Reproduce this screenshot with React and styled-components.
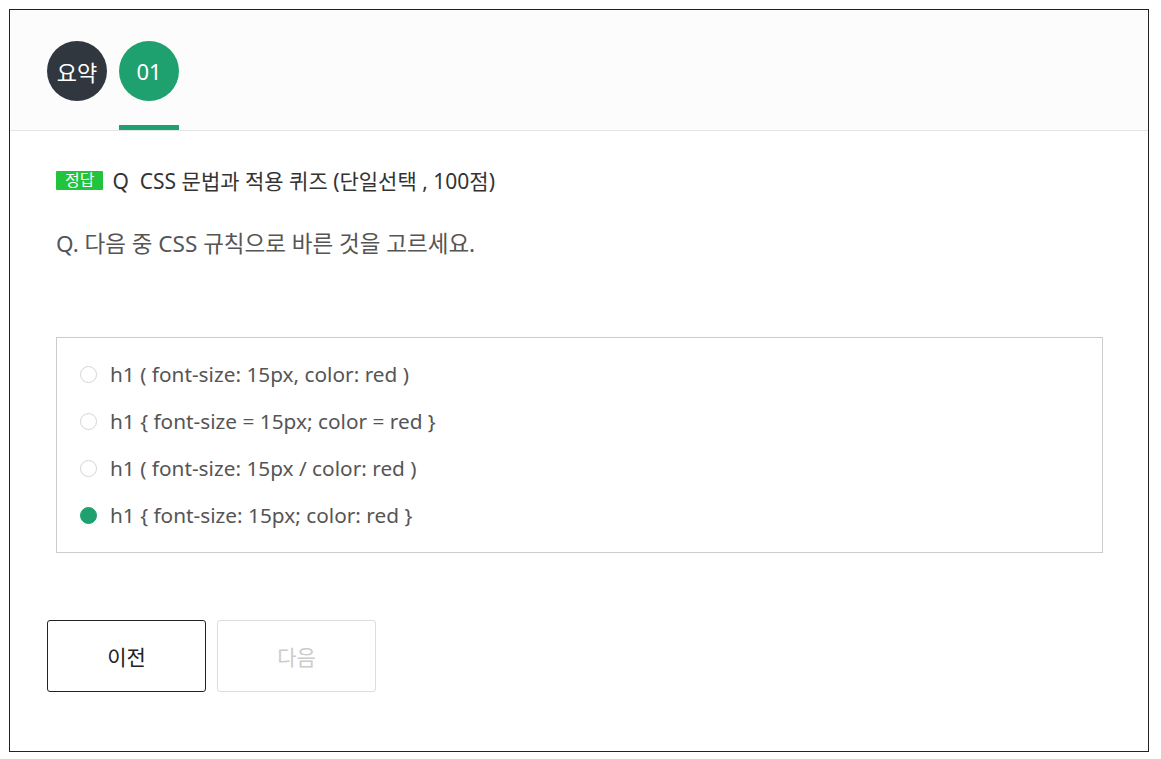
import styled, { createGlobalStyle } from "styled-components";

const GlobalStyle = createGlobalStyle`
  body {
    margin: 0;
    background: #fff;
    font-family: "Noto Sans", "Noto Sans CJK KR", sans-serif;
  }
`;

const options = [
  "h1 ( font-size: 15px, color: red )",
  "h1 { font-size = 15px; color = red }",
  "h1 ( font-size: 15px / color: red )",
  "h1 { font-size: 15px; color: red }",
];

const App = () => {
  return (
    <Page>
      <GlobalStyle />
      <Frame>
        <Header>
          <Tab>
            <Circle $dark>요약</Circle>
          </Tab>
          <Tab $active>
            <Circle>01</Circle>
          </Tab>
        </Header>

        <Content>
          <Title>
            <Badge>정답</Badge>
            <span>Q&nbsp;&nbsp;CSS 문법과 적용 퀴즈 (단일선택 , 100점)</span>
          </Title>
          <Question>Q. 다음 중 CSS 규칙으로 바른 것을 고르세요.</Question>

          <OptionBox>
            {options.map((text, i) => (
              <Option key={i}>
                <Radio $checked={i === 3} />
                {text}
              </Option>
            ))}
          </OptionBox>
        </Content>

        <Buttons>
          <NavButton>이전</NavButton>
          <NavButton disabled>다음</NavButton>
        </Buttons>
      </Frame>
    </Page>
  );
};

const Page = styled.div`
  padding: 9px 12px 7px 9px;
`;

const Frame = styled.div`
  width: 1138px;
  height: 741px;
  border: 1px solid #222;
  display: flex;
  flex-direction: column;
`;

const Header = styled.div`
  height: 89px;
  padding: 31px 37px 0;
  background: #fcfcfc;
  border-bottom: 1px solid #e5e5e5;
  display: flex;
  gap: 12px;
`;

const Tab = styled.div`
  width: 60px;
  display: flex;
  flex-direction: column;
  justify-content: space-between;

  &::after {
    content: "";
    height: 5px;
    background: ${(p) => (p.$active ? "#1fa06f" : "transparent")};
  }
`;

const Circle = styled.div`
  width: 60px;
  height: 60px;
  border-radius: 50%;
  background: ${(p) => (p.$dark ? "#30373e" : "#1fa06f")};
  color: #fff;
  font-size: 22px;
  display: flex;
  align-items: center;
  justify-content: center;
`;

const Content = styled.div`
  padding: 35px 45px 0 46px;
`;

const Title = styled.div`
  display: flex;
  align-items: center;
  gap: 9px;
  font-size: 21px;
  color: #333;
  height: 28px;
`;

const Badge = styled.span`
  background: #22c33d;
  color: #fff;
  font-size: 16px;
  line-height: 19px;
  padding: 0 9px;
  border-radius: 1px;
`;

const Question = styled.div`
  margin-top: 36px;
  font-size: 22.5px;
  color: #555;
  line-height: 28px;
`;

const OptionBox = styled.div`
  margin-top: 79px;
  border: 1px solid #ccc;
  padding: 23px 22px 24px 23px;
  display: flex;
  flex-direction: column;
  gap: 21px;
`;

const Option = styled.div`
  display: flex;
  align-items: center;
  gap: 13px;
  font-size: 20.8px;
  color: #555;
  height: 26px;
`;

const Radio = styled.span`
  width: 17px;
  height: 17px;
  box-sizing: border-box;
  border-radius: 50%;
  border: 1px solid ${(p) => (p.$checked ? "#1fa06f" : "#d4d4d4")};
  background: ${(p) => (p.$checked ? "#1fa06f" : "#fff")};
`;

const Buttons = styled.div`
  display: flex;
  gap: 11px;
  padding: 67px 37px 0;
`;

const NavButton = styled.button`
  width: 159px;
  height: 72px;
  border-radius: 3px;
  background: #fff;
  border: 1px solid ${(p) => (p.disabled ? "#ddd" : "#222")};
  color: ${(p) => (p.disabled ? "#ccc" : "#222")};
  font-family: inherit;
  font-size: 21px;
`;

export default App;
